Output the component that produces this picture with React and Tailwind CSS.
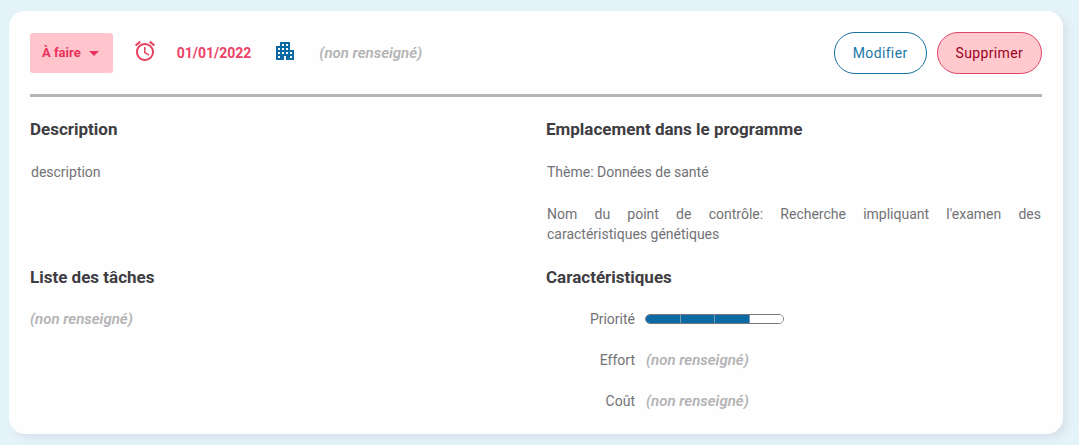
import { MdAccessAlarm, MdApartment, MdArrowDropDown } from "react-icons/md";

function Empty() {
  return <em className="block text-[15px] leading-5 font-semibold text-[#b3b3b6]">(non renseigné)</em>;
}

function Heading({ children }) {
  return <h2 className="text-[17px] leading-[22px] font-bold text-[#3f3d42]">{children}</h2>;
}

function Meter({ value, max }) {
  const steps = Array.from({ length: max }, (_, i) => i < value);
  return (
    <div
      role="meter"
      aria-labelledby="priority"
      aria-valuemin={0}
      aria-valuemax={max}
      aria-valuenow={value}
      className="flex h-[10px] w-[139px] divide-x divide-[#7c9db3] overflow-hidden rounded-full border border-[#77777c]"
    >
      {steps.map((on, i) => (
        <span key={i} className={on ? "flex-1 bg-[#0b69a3]" : "flex-1 bg-white"} />
      ))}
    </div>
  );
}

export default function App() {
  return (
    <main className="min-h-screen bg-[#e4f2f9] pt-[11px] pr-4 pb-[11px] pl-[9px] font-['Roboto',sans-serif]">
      <article className="rounded-2xl bg-[#fefefe] px-[21px] pt-[21px] pb-[23px] shadow-[4px_4px_6px_#d9e2eb]">
        <header className="flex items-center justify-between border-b-[3px] border-[#b5b5b8] pb-5">
          <div className="flex items-center">
            <button
              type="button"
              className="flex h-10 items-center gap-px rounded-[3px] bg-[#ffc4cc] pr-[7px] pl-3 text-[13px] leading-5 font-bold text-[#e8325c]"
            >
              À faire
              <MdArrowDropDown className="size-6" aria-hidden="true" />
            </button>
            <MdAccessAlarm className="mb-1 ml-5 size-6 text-[#e8405f]" aria-hidden="true" />
            <time dateTime="2022-01-01" className="ml-5 text-sm leading-5 font-bold text-[#ee4266]">
              01/01/2022
            </time>
            <MdApartment className="mb-1 ml-[22px] size-6 text-[#0b69a3]" aria-hidden="true" />
            <span className="ml-[22px]">
              <Empty />
            </span>
          </div>
          <div className="flex gap-[10px]">
            <button
              type="button"
              className="h-[42px] rounded-full border border-[#1670a0] bg-white px-[18px] text-sm tracking-wide text-[#1b78a8]"
            >
              Modifier
            </button>
            <button
              type="button"
              className="h-[42px] rounded-full border border-[#e0456a] bg-[#ffc9cd] px-[18px] text-sm tracking-wide text-[#9b0022]"
            >
              Supprimer
            </button>
          </div>
        </header>

        <div className="mt-[21px] grid grid-cols-2 gap-x-5 gap-y-[22px] text-sm leading-5 text-[#727276]">
          <section className="space-y-[22px]">
            <Heading>Description</Heading>
            <p className="px-px">description</p>
          </section>
          <section className="space-y-[22px]">
            <Heading>Emplacement dans le programme</Heading>
            <p className="px-px">Thème: Données de santé</p>
            <p className="px-px text-justify">
              Nom du point de contrôle: Recherche impliquant l'examen des caractéristiques&nbsp;génétiques
            </p>
          </section>
          <section className="space-y-[21px]">
            <Heading>Liste des tâches</Heading>
            <Empty />
          </section>
          <section className="space-y-[21px]">
            <Heading>Caractéristiques</Heading>
            <dl className="grid grid-cols-[89px_1fr] items-center gap-x-[10px] gap-y-[21px]">
              <dt id="priority" className="text-right">Priorité</dt>
              <dd>
                <Meter value={3} max={4} />
              </dd>
              <dt className="text-right">Effort</dt>
              <dd className="pl-px">
                <Empty />
              </dd>
              <dt className="text-right">Coût</dt>
              <dd className="pl-px">
                <Empty />
              </dd>
            </dl>
          </section>
        </div>
      </article>
    </main>
  );
}
